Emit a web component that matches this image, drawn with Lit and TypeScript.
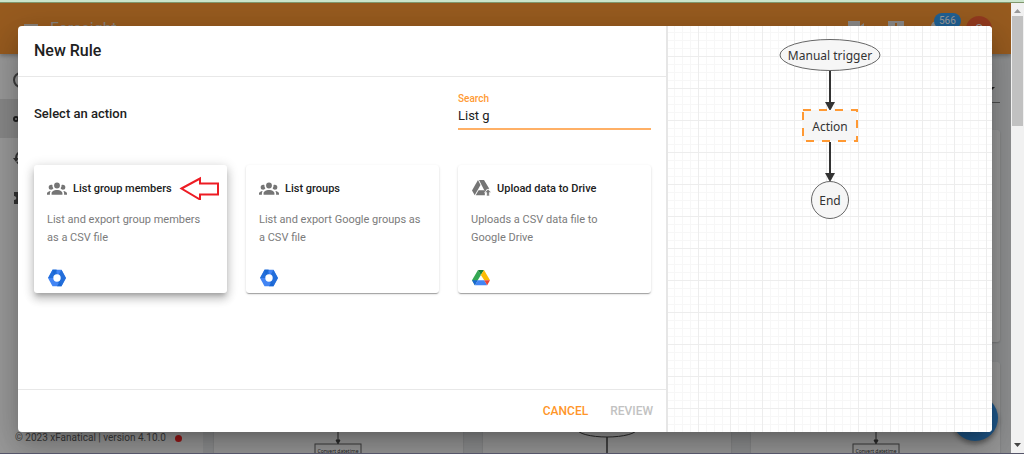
import { LitElement, html, svg, css } from "lit";
import { customElement, property, state } from "lit/decorators.js";

interface Action {
  title: string;
  text: string;
  icon: "group" | "upload";
  app: "admin" | "drive";
}

const ACTIONS: Action[] = [
  { title: "List group members", text: "List and export group members as a CSV file", icon: "group", app: "admin" },
  { title: "List groups", text: "List and export Google groups as a CSV file", icon: "group", app: "admin" },
  { title: "Upload data to Drive", text: "Uploads a CSV data file to Google Drive", icon: "upload", app: "drive" },
];

const groupIcon = html`<svg width="20" height="20" viewBox="0 0 24 24" fill="#757575" aria-hidden="true">
  <path d="M12 5.5A3.5 3.5 0 0 1 15.5 9a3.5 3.5 0 0 1-3.5 3.5A3.5 3.5 0 0 1 8.5 9 3.500 3.500 0 0 1 12 5.500M5 8c.56 0 1.080.15 1.530.42-.15 1.430.27 2.850 1.130 3.960C7.160 13.340 6.160 14 5 14a3 3 0 0 1-3-3 3 3 0 0 1 3-3m14 0a3 3 0 0 1 3 3 3 3 0 0 1-3 3c-1.160 0-2.160-.66-2.660-1.620a5.540 5.540 0 0 0 1.130-3.960c.45-.27.97-.42 1.530-.42M5.500 18.250c0-2.070 2.910-3.750 6.500-3.750s6.500 1.680 6.500 3.750V20h-13v-1.750M0 20v-1.500c0-1.390 1.890-2.560 4.450-2.900-.59.68-.95 1.620-.95 2.650V20H0m24 0h-3.500v-1.750c0-1.030-.36-1.970-.95-2.650 2.560.34 4.450 1.510 4.450 2.900V20z"/>
</svg>`;

const uploadIcon = html`<svg width="20" height="20" viewBox="0 0 20 20" fill="#757575" aria-hidden="true">
  <path d="M7 2 1 12.500 3.700 17.200 9.500 7z"/>
  <path d="M8 2h5l5.300 8.800-2.300.2-2 2.700z"/>
  <path d="M7.600 12.200h5.700l.5 1v4H4.700z"/>
  <path d="M17 11.200 20.300 14.600h-2V18h-2.600v-3.400h-2z" stroke="#fff" stroke-width=".6"/>
</svg>`;

const adminLogo = html`<svg width="20" height="20" viewBox="0 0 20 20" aria-hidden="true">
  <path d="M5.500 1.800h9L19 10l-4.500 8.200h-9L1 10z" fill="#4285f4"/>
  <path d="M5.500 1.800 1 10h6l3-4-1-4.200zM14.500 18.200 19 10l-4.500-8.200L12 6l1.500 4-3.500 3.500z" fill="#1967d2" opacity=".75"/>
  <path d="M5.500 1.800H10L7 7zM14.500 18.200H10l3-5z" fill="#1967d2"/>
  <circle cx="10" cy="10" r="3.700" fill="#fff"/>
</svg>`;

const driveLogo = html`<svg width="20" height="20" viewBox="0 0 20 20" aria-hidden="true">
  <path d="M7 2 1 12.300l2.800 5L9.900 7z" fill="#34a853"/>
  <path d="M7 2h6l-3.100 5z" fill="#188038"/>
  <path d="M13 2 9.900 7l3.300 5.300H19z" fill="#fbbc04"/>
  <path d="M1 12.300h5.800l-3 5z" fill="#1967d2"/>
  <path d="M6.800 12.300h6.400l3 5H3.800z" fill="#4285f4"/>
  <path d="M13.200 12.300H19l-2.800 5z" fill="#ea4335"/>
</svg>`;

@customElement("action-card")
class ActionCard extends LitElement {
  @property({ attribute: false }) action!: Action;
  @property({ type: Boolean }) raised = false;

  static styles = css`
    :host { display: block; }
    .card {
      display: flex;
      flex-direction: column;
      align-items: stretch;
      width: 100%;
      min-height: 128px;
      box-sizing: border-box;
      padding: 13px 13px 5px;
      border: 0;
      border-radius: 3px;
      background: #fff;
      text-align: left;
      font-family: Roboto, sans-serif;
      cursor: pointer;
      box-shadow: 0 2px 1px -1px rgba(0, 0, 0, .2), 0 1px 1px rgba(0, 0, 0, .14), 0 1px 3px rgba(0, 0, 0, .12);
    }
    .raised {
      box-shadow: 0 4px 4px -2px rgba(0, 0, 0, .2), 0 6px 8px 1px rgba(0, 0, 0, .14), 0 2px 11px 2px rgba(0, 0, 0, .12);
    }
    svg { flex: none; display: block; }
    .head { display: flex; align-items: center; gap: 6px; height: 20px; }
    .title { font-size: 11px; font-weight: 500; color: #212121; white-space: nowrap; }
    .text { margin-top: 13px; padding-right: 4px; font-size: 11px; line-height: 18px; color: #7b7b7b; }
    .foot { margin-top: auto; }
  `;

  render() {
    const a = this.action;
    return html`<button class="card ${this.raised ? "raised" : ""}">
      <span class="head">
        ${a.icon === "group" ? groupIcon : uploadIcon}
        <span class="title">${a.title}</span>
        ${this.raised
          ? html`<svg width="42" height="24" viewBox="-2 0 42 24" fill="none" stroke="#ed1c24" stroke-width="2" aria-hidden="true">
              <path d="M1.500 12.500 20 2.500v5h18v11H20v5z"/>
            </svg>`
          : ""}
      </span>
      <span class="text">${a.text}</span>
      <span class="foot">${a.app === "admin" ? adminLogo : driveLogo}</span>
    </button>`;
  }
}

@customElement("flow-chart")
class FlowChart extends LitElement {
  static styles = css`
    :host { display: block; }
    svg { display: block; font-family: "Noto Sans", sans-serif; }
    text { font-size: 12px; fill: #333; text-anchor: middle; }
    .node { fill: #f6f6f6; stroke: #666; stroke-width: 1; }
    .action { fill: #f6f6f6; stroke: #ff9933; stroke-width: 2; stroke-dasharray: 8 8; }
    .edge { stroke: #333; stroke-width: 2; }
    .tip { fill: #333; }
  `;

  render() {
    return html`<svg width="102" height="182" viewBox="0 0 102 182" role="img" aria-label="Rule flow">
      <ellipse class="node" cx="51" cy="17" rx="50" ry="15.500"/>
      <text x="51" y="22">Manual trigger</text>
      <path class="edge" d="M51 33v35"/>
      <path class="tip" d="M46 64h10l-5 9z"/>
      <rect class="action" x="24" y="72" width="54" height="31"/>
      <text x="51" y="93">Action</text>
      <path class="edge" d="M51 104v36"/>
      <path class="tip" d="M46 135h10l-5 9z"/>
      <circle class="node" cx="51" cy="162" r="18.500"/>
      <text x="51" y="167">End</text>
    </svg>`;
  }
}

@customElement("app-root")
class AppRoot extends LitElement {
  @state() private query = "List g";

  static styles = css`
    :host {
      display: flex;
      flex-direction: column;
      height: 100vh;
      overflow: hidden;
      box-sizing: border-box;
      border-top: 2px solid #cbe5cb;
      border-bottom: 1px solid #56566a;
      font-family: Roboto, sans-serif;
      color: #212121;
    }
    svg { display: block; flex: none; }
    .window { flex: 1; min-height: 0; display: flex; border-top: 1px solid #80976d; }
    .app { position: relative; flex: 1; min-width: 0; display: flex; flex-direction: column; overflow: hidden; background: #eceff1; }

    .bar {
      flex: none;
      display: flex;
      align-items: center;
      gap: 10px;
      height: 51px;
      padding: 0 19px 0 22px;
      box-sizing: border-box;
      background: #fb8c1f;
      color: #fff;
      box-shadow: 0 2px 4px rgba(0, 0, 0, .3);
      z-index: 1;
    }
    .brand { flex: 1; font-size: 16px; line-height: 24px; color: #e0d4c8; }
    .tools { display: flex; align-items: center; gap: 20px; }
    .bell { position: relative; }
    .badge {
      position: absolute;
      left: 8px;
      top: -6px;
      padding: 0 5px;
      border-radius: 8px;
      background: #2196f3;
      font-size: 10px;
      line-height: 16px;
    }
    .avatar {
      width: 26px;
      height: 26px;
      border-radius: 50%;
      background: #f4511e;
      text-align: center;
      font-size: 12px;
      line-height: 26px;
    }

    .body { flex: 1; min-height: 0; display: grid; grid-template-columns: 203px minmax(0, 1fr); }
    .side { display: flex; flex-direction: column; background: #fff; }
    .menu { flex: 1; margin: 0; padding: 6px 0 0; }
    .link { display: flex; align-items: center; height: 39px; padding-left: 12px; }
    .current { background: #e0e0e0; }
    .version { display: flex; align-items: center; gap: 9px; padding: 0 15px 8px; font-size: 10px; line-height: 14px; color: #555; }
    .dot { width: 7px; height: 7px; border-radius: 50%; background: #ff1010; }

    .main { padding: 0 11px; overflow: hidden; }
    .filter { display: flex; justify-content: flex-end; height: 49px; margin-bottom: 27px; border-bottom: 1px solid #777; align-items: center; box-sizing: border-box; }
    .filter svg { margin-top: 22px; }
    .rules { display: grid; grid-template-columns: repeat(3, minmax(0, 1fr)); gap: 20px; }
    .rule { height: 212px; border-radius: 3px; background: #fff; box-shadow: 0 1px 2px rgba(0, 0, 0, .2); display: flex; justify-content: center; }
    .rule text { font: 5px "Noto Sans", sans-serif; text-anchor: middle; fill: #222; }
    .rule svg { margin-top: 60px; }
    .fab {
      position: absolute;
      right: 13px;
      bottom: 12px;
      width: 46px;
      height: 46px;
      border: 0;
      border-radius: 50%;
      background: #1e88e5;
      box-shadow: 0 3px 5px rgba(0, 0, 0, .4);
      z-index: 1;
    }

    .scrim {
      position: absolute;
      inset: 0;
      z-index: 2;
      display: flex;
      box-sizing: border-box;
      padding: 23px 19px 21px 18px;
      background: rgba(33, 33, 33, .46);
    }
    .dialog {
      flex: 1;
      min-width: 0;
      display: grid;
      grid-template-columns: minmax(0, 325fr) minmax(0, 162fr);
      border-radius: 4px;
      overflow: hidden;
      background: #fff;
      box-shadow: 0 9px 12px -6px rgba(0, 0, 0, .2), 0 19px 30px 2px rgba(0, 0, 0, .14), 0 7px 37px 6px rgba(0, 0, 0, .12);
    }
    .pane { display: flex; flex-direction: column; border-right: 2px solid #e6e6e6; }
    .title { margin: 0; padding: 13px 16px; font-size: 16px; line-height: 24px; font-weight: 500; border-bottom: 1px solid #e8e8e8; }
    .content { flex: 1; padding: 14px 15px 14px 16px; display: grid; grid-template-columns: repeat(3, minmax(0, 1fr)); align-content: start; gap: 35px 19px; }
    .sub { grid-column: span 2; margin: 0; font-size: 13px; line-height: 18px; font-weight: 500; padding-top: 14px; }
    .field { display: flex; flex-direction: column; padding-top: 1px; border-bottom: 2px solid #ffb066; }
    .field label { font-size: 10px; line-height: 14px; font-weight: 500; color: #ff9a33; }
    .field input {
      width: 100%;
      height: 18px;
      box-sizing: border-box;
      margin-bottom: 4px;
      padding: 0;
      border: 0;
      outline: 0;
      background: none;
      font: 13px Roboto, sans-serif;
      color: #212121;
    }
    .buttons { display: flex; justify-content: flex-end; gap: 22px; padding: 12px 13px; border-top: 1px solid #e8e8e8; }
    .btn { padding: 0; height: 18px; border: 0; background: none; font: 500 12px/18px Roboto, sans-serif; text-transform: uppercase; color: #ff9528; }
    .btn:disabled { color: #c2c2c2; }
    .graph {
      display: flex;
      justify-content: center;
      align-items: flex-start;
      padding: 12px 0 0;
      background-color: #fff;
      background-image:
        linear-gradient(#ededed 1px, transparent 1px),
        linear-gradient(90deg, #ededed 1px, transparent 1px),
        linear-gradient(#f7f7f7 1px, transparent 1px),
        linear-gradient(90deg, #f7f7f7 1px, transparent 1px);
      background-size: 32px 32px, 32px 32px, 8px 8px, 8px 8px;
      background-position: 30px 30px, 30px 30px, 6px 6px, 6px 6px;
    }

    .scroll { flex: none; width: 13px; display: flex; flex-direction: column; align-items: center; box-sizing: border-box; padding: 4px 0; background: #f1f1f1; }
    .thumb { width: 11px; height: 110px; background: #c1c1c1; }
    .space { flex: 1; }
  `;

  private rule(tall: boolean) {
    return html`<div class="rule">
      <svg width="60" height="60" viewBox="0 0 60 60" fill="none" stroke="#333" aria-hidden="true">
        ${tall
          ? svg`<ellipse cx="30" cy="7" rx="30" ry="8"/><path d="M30 15v45" stroke-width="1.500"/>`
          : svg`<path d="M30 0v20"/><path d="M28 18h4l-2 4z" fill="#333"/>
              <rect x="7" y="22" width="46" height="20" stroke="#555"/>
              <text x="30" y="31" stroke="none">Convert datetime</text>`}
      </svg>
    </div>`;
  }

  render() {
    return html`
      <div class="window">
        <div class="app">
          <header class="bar">
            <svg width="18" height="18" viewBox="0 0 18 18" fill="#e0d4c8"><path d="M2 4h14v2H2zM2 8h14v2H2zM2 12h14v2H2z"/></svg>
            <span class="brand">Foresight</span>
            <div class="tools">
              <svg width="20" height="20" viewBox="0 0 20 20" fill="#e4e0dc"><path d="M2 2h12v5l4-3v12l-4-3v4H2z"/></svg>
              <svg width="20" height="20" viewBox="0 0 20 20" fill="#e4e0dc"><path fill-rule="evenodd" d="M2 2h16v13H6l-4 4zM9 4v5h2V4zm0 6v2h2v-2z"/></svg>
              <div class="bell">
                <svg width="20" height="20" viewBox="0 0 20 20" fill="#e4e0dc"><path d="M10 2c-4 1-5 3-5 7v4l-2 2v1h14v-1l-2-2V9c0-4-1-6-5-7z"/></svg>
                <span class="badge">566</span>
              </div>
              <span class="avatar">S</span>
            </div>
          </header>
          <div class="body">
            <aside class="side">
              <nav class="menu">
                <div class="link"><svg width="18" height="18" viewBox="0 0 18 18" fill="none" stroke="#555" stroke-width="2"><circle cx="9" cy="9" r="7"/><circle cx="8" cy="6" r="1" /></svg></div>
                <div class="link current"><svg width="18" height="18" viewBox="0 0 18 18" fill="none" stroke="#222" stroke-width="2"><circle cx="4" cy="9" r="2"/><path d="M6 9h10v3"/></svg></div>
                <div class="link"><svg width="18" height="18" viewBox="0 0 18 18" fill="none" stroke="#444" stroke-width="2"><path d="M4 9c0-8 11-8 11 0s-8 7-10 4"/><path d="M1 9h6l-3 4z" fill="#444" stroke="none"/></svg></div>
                <div class="link"><svg width="18" height="18" viewBox="0 0 18 18" fill="#444"><path d="M2 4h4c0-4 4-4 4 0h5v4c3 0 3 4 0 4v4H2v-4c3 0 3-4 0-4z"/></svg></div>
              </nav>
              <div class="version"><span>© 2023 xFanatical | version 4.10.0</span><span class="dot"></span></div>
            </aside>
            <main class="main">
              <div class="filter"><svg width="16" height="6" viewBox="0 0 16 6" fill="#222"><path d="M3 1h8L7 5z"/></svg></div>
              <div class="rules">
                <div class="rule"></div><div class="rule"></div><div class="rule"></div>
                ${this.rule(false)}${this.rule(true)}${this.rule(false)}
              </div>
            </main>
          </div>
          <button class="fab" aria-label="Add"></button>

          <div class="scrim">
            <section class="dialog" role="dialog" aria-labelledby="title">
              <div class="pane">
                <h1 class="title" id="title">New Rule</h1>
                <div class="content">
                  <h2 class="sub">Select an action</h2>
                  <div class="field">
                    <label for="search">Search</label>
                    <input id="search" type="text" .value=${this.query}
                      @input=${(e: Event) => (this.query = (e.target as HTMLInputElement).value)} />
                  </div>
                  ${ACTIONS.map((a, i) => html`<action-card .action=${a} ?raised=${i === 0}></action-card>`)}
                </div>
                <div class="buttons">
                  <button class="btn">Cancel</button>
                  <button class="btn" disabled>Review</button>
                </div>
              </div>
              <div class="graph"><flow-chart></flow-chart></div>
            </section>
          </div>
        </div>
        <div class="scroll" aria-hidden="true">
          <svg width="9" height="9" viewBox="0 0 9 9" fill="#999"><path d="M1 6h7L4.500 2z"/></svg>
          <div class="thumb"></div>
          <div class="space"></div>
          <svg width="9" height="9" viewBox="0 0 9 9" fill="#444"><path d="M1 3h7L4.500 7z"/></svg>
        </div>
      </div>`;
  }
}
